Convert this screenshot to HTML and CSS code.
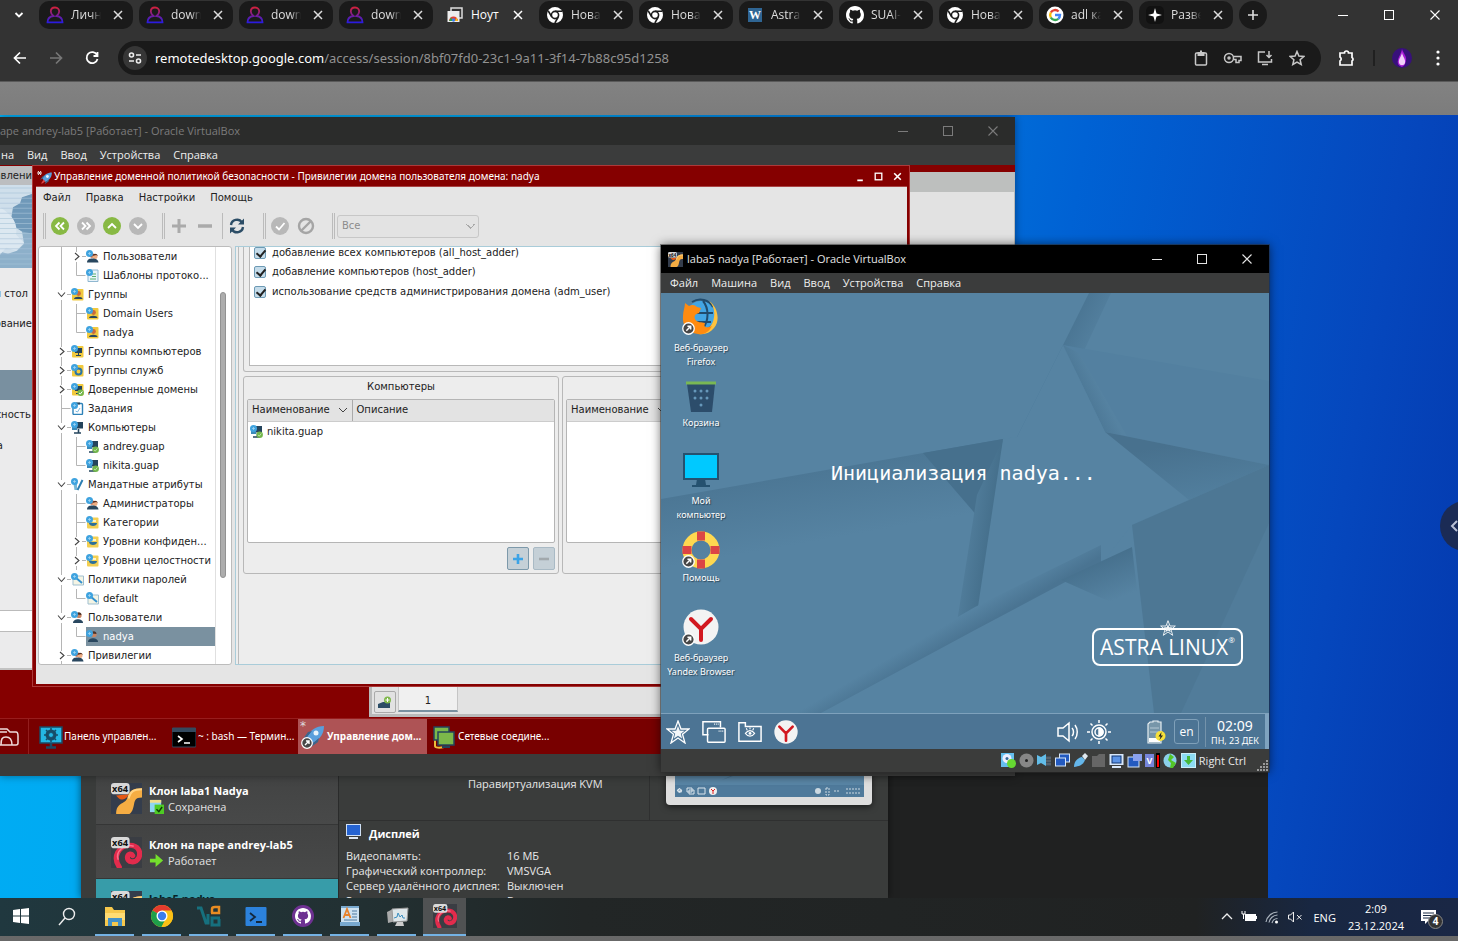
FILE: index.html
```html
<!DOCTYPE html>
<html lang="ru">
<head>
<meta charset="utf-8">
<title>Ноутбук - Удаленный рабочий стол</title>
<link rel="stylesheet" href="styles.css">
</head>
<body>
<svg class="defs" aria-hidden="true">
  <defs>
    <linearGradient id="g-user" x1="0" y1="0" x2="0" y2="1"><stop offset="0" stop-color="#d0213f"/><stop offset="1" stop-color="#2a1be0"/></linearGradient>
  </defs>
  <symbol id="i-user" viewBox="0 0 18 18"><path d="M9 1.500c-3 0-4.200 2-4.200 4s1.300 3.500 2.700 4.500C4 10.500 1.500 13 1.500 16.300h15C16.500 13 14 10.500 10.500 10c1.400-1 2.700-2.500 2.700-4.500s-1.200-4-4.200-4z" fill="none" stroke="url(#g-user)" stroke-width="1.800"/></symbol>
  <symbol id="i-chrome-bw" viewBox="0 0 18 18"><circle cx="9" cy="9" r="8" fill="#fff"/><circle cx="9" cy="9" r="3.600" fill="#fff" stroke="#1b1b1b" stroke-width="1.600"/><path d="M9 5.200h7M5.800 11L2.300 5M12.300 11l-3.500 6" stroke="#1b1b1b" stroke-width="1.500"/></symbol>
  <symbol id="i-chrome" viewBox="0 0 24 24"><circle cx="12" cy="12" r="11" fill="#fbc116"/><path d="M12 12L2.500 6.500A11 11 0 0 1 21.500 6.500z" fill="#e33b2e"/><path d="M12 12L2.500 6.500A11 11 0 0 0 11.500 23L16 14z" fill="#1e9e4a"/><path d="M12 6.500h9.500A11 11 0 0 1 11.500 23L16.500 14z" fill="#fbc116"/><circle cx="12" cy="12" r="5.500" fill="#fff"/><circle cx="12" cy="12" r="4.200" fill="#3b7ded"/></symbol>
  <symbol id="i-octo" viewBox="0 0 16 16"><path fill="currentColor" fill-rule="evenodd" d="M8 0C3.580 0 0 3.580 0 8c0 3.540 2.290 6.530 5.470 7.590.4.070.55-.17.55-.38 0-.19-.01-.82-.01-1.490-2.010.37-2.530-.49-2.690-.94-.09-.23-.48-.94-.82-1.130-.28-.15-.68-.52-.01-.53.63-.01 1.080.58 1.230.82.72 1.210 1.870.87 2.330.66.07-.52.28-.87.51-1.070-1.780-.2-3.640-.89-3.640-3.950 0-.87.31-1.590.82-2.150-.08-.2-.36-1.020.08-2.120 0 0 .67-.21 2.200.82a7.600 7.600 0 0 1 4 0c1.530-1.040 2.200-.82 2.200-.82.44 1.100.16 1.920.08 2.120.51.56.82 1.270.82 2.150 0 3.070-1.870 3.750-3.650 3.950.29.25.54.73.54 1.480 0 1.070-.01 1.930-.01 2.200 0 .21.15.46.55.38A8 8 0 0 0 16 8c0-4.420-3.580-8-8-8z"/></symbol>
  <symbol id="i-x" viewBox="0 0 12 12"><path d="M2 2l8 8M10 2l-8 8" stroke="currentColor" stroke-width="1.500"/></symbol>
  <symbol id="w-min" viewBox="0 0 12 12"><path d="M1 6.500h10" stroke="currentColor"/></symbol>
  <symbol id="w-max" viewBox="0 0 12 12"><rect x="1.500" y="1.500" width="9" height="9" fill="none" stroke="currentColor"/></symbol>
  <symbol id="w-x" viewBox="0 0 12 12"><path d="M1.500 1.500l9 9M10.500 1.500l-9 9" stroke="currentColor" stroke-width="1.100"/></symbol>
  <symbol id="t-open" viewBox="0 0 14 19"><path d="M4.500 0v5M4.500 15v4M10 9.500h4" stroke="#b5b5b5"/><path d="M1 7.500l3.500 4 3.500-4" fill="none" stroke="#444" stroke-width="1.100"/></symbol>
  <symbol id="t-closed" viewBox="0 0 14 19"><path d="M4.500 0v5M4.500 15v4M10 9.500h4" stroke="#b5b5b5"/><path d="M3 6l4 3.500-4 3.500" fill="none" stroke="#444" stroke-width="1.100"/></symbol>
  <symbol id="t-tee" viewBox="0 0 14 19"><path d="M4.500 0v19M4.500 9.500h9" stroke="#b5b5b5" fill="none"/></symbol>
  <symbol id="t-end" viewBox="0 0 14 19"><path d="M4.500 0v9.500h9" stroke="#b5b5b5" fill="none"/></symbol>
  <symbol id="n-badge" viewBox="0 0 13 13"><circle cx="3.500" cy="3.500" r="3.500" fill="#3fa3df"/><path d="M3.500 2v3M2 3.500h3" stroke="#a6d7f2" stroke-width=".7"/></symbol>
  <symbol id="n-users" viewBox="0 0 13 13"><circle cx="6" cy="5.500" r="2.300" fill="#c0532c"/><circle cx="9" cy="6.500" r="2.500" fill="#efae84"/><path d="M6.500 6c0-3 5-3 5.200 0l-1.500-1z" fill="#5b2f20"/><path d="M1 12.500c0-3.500 3-4 5-4s6 0 6.500 4z" fill="#29475f"/><use href="#n-badge"/></symbol>
  <symbol id="n-doc" viewBox="0 0 13 13"><path d="M2 1h10v11.500H2z" fill="#e9f3fa" stroke="#8fb7d0"/><path d="M6 5h4M6 7.500h4M4 10h6" stroke="#5bb072"/><use href="#n-badge"/></symbol>
  <symbol id="n-task" viewBox="0 0 13 13"><rect x="2" y="1.500" width="9.500" height="11" rx="1" fill="#fff" stroke="#2d82b8" stroke-width="1.400"/><path d="M5 1.500h4" stroke="#26485f" stroke-width="2"/><path d="M4.500 9l2 1 2.500-4" stroke="#7cb8df" fill="none"/><use href="#n-badge"/></symbol>
  <symbol id="n-group" viewBox="0 0 13 13"><rect x="1" y="1" width="11.500" height="11.500" rx="1" fill="#f1c93e"/><circle cx="7.500" cy="5.500" r="2.400" fill="#ca6a3d"/><path d="M3 11c0-3 8.500-3 8.500 0z" fill="#29475f"/><use href="#n-badge"/></symbol>
  <symbol id="n-gcomp" viewBox="0 0 13 13"><rect x="1" y="1" width="11.500" height="11.500" rx="1" fill="#f1c93e"/><rect x="4" y="3" width="7" height="5" fill="#24445c"/><path d="M7.500 8v2.500M5 10.500h5" stroke="#24445c"/><use href="#n-badge"/></symbol>
  <symbol id="n-gserv" viewBox="0 0 13 13"><rect x="1" y="1" width="11.500" height="11.500" rx="1" fill="#f1c93e"/><circle cx="7.500" cy="7.500" r="3" fill="none" stroke="#2875a7" stroke-width="2"/><use href="#n-badge"/></symbol>
  <symbol id="n-trust" viewBox="0 0 13 13"><use href="#n-gcomp"/><circle cx="9.700" cy="9.700" r="3.200" fill="#72b64b"/><path d="M8 10l1.300 1 2-2.500" stroke="#fff" fill="none"/></symbol>
  <symbol id="n-comp" viewBox="0 0 13 13"><rect x="3" y="1" width="9" height="6.500" fill="#24445c"/><path d="M7.500 8v4M3 12h7" stroke="#24445c" stroke-width="1.600"/><path d="M1 6h5v3H1z" fill="#3b8ab8"/><use href="#n-badge"/></symbol>
  <symbol id="n-host" viewBox="0 0 13 13"><use href="#n-comp"/><circle cx="9.700" cy="9.700" r="3.200" fill="#72b64b"/><path d="M8 10l1.300 1 2-2.500" stroke="#cfe9bf" fill="none" stroke-width=".8"/></symbol>
  <symbol id="n-attr" viewBox="0 0 13 13"><path d="M2 3h4v9H3.500z" fill="#79b8d6"/><path d="M11.500 2L6.500 12" stroke="#2d7fb3" stroke-width="2"/><use href="#n-badge"/></symbol>
  <symbol id="n-folder" viewBox="0 0 13 13"><rect x="1" y="1.500" width="11.500" height="11" rx="1" fill="#f3cf52"/><path d="M3 7h8c0 4-8 4-8 0z" fill="#2c6f99"/><path d="M5 5h5" stroke="#fff5c8" stroke-width="2"/><use href="#n-badge"/></symbol>
  <symbol id="n-key" viewBox="0 0 13 13"><path d="M2 3h10.500v9H2z" fill="#f4f4e4" stroke="#9fbfd0"/><path d="M4 4l7 6" stroke="#3391cf" stroke-width="2"/><use href="#n-badge"/></symbol>
  <symbol id="n-user" viewBox="0 0 13 13"><circle cx="8" cy="4.500" r="2.600" fill="#c98563"/><path d="M5.500 3.500c0-3 5-3 5 .5z" fill="#4c3329"/><path d="M2 12c0-5 10-5 10 0z" fill="#29475f"/><use href="#n-badge"/></symbol>
  <symbol id="i-link" viewBox="0 0 12 12"><circle cx="6" cy="6" r="5.300" fill="#474747" stroke="#fff" stroke-width="1.200"/><path d="M4 8l4-4M5 4h3v3" stroke="#fff" fill="none" stroke-width="1.400"/></symbol>
  <symbol id="i-vb-y" viewBox="0 0 30 30"><rect width="30" height="30" fill="#343d4c"/><path d="M30 5v9c-7 0-7 3-8 8-1 5-3 8-5 8H5c0-12 9-9 11-16 1-6 5-9 14-9z" fill="#f5ad43"/><path d="M5 12c4 6 10 5 12-1z" fill="#e55813"/><path d="M30 6c-8 0-11 2-13 9" stroke="#ffd383" fill="none" stroke-width="2"/><rect width="18" height="11" rx="3" fill="#d9d9d9"/><text x="1" y="9" font-family="Open Sans" font-weight="700" font-size="9" fill="#111">x64</text></symbol>
  <symbol id="i-vb-r" viewBox="0 0 30 30"><rect width="30" height="30" fill="#3a3d43"/><path d="M8 29C1 19 8 8 18 8c9 0 11 7 9 12-3 6-12 5-11-1 1-3 4-3 5-1" fill="none" stroke="#e22b4c" stroke-width="5" stroke-linecap="round"/><path d="M7 22C4 14 13 6 22 9" fill="none" stroke="#f7718b" stroke-width="1.500"/><rect width="18" height="11" rx="3" fill="#d9d9d9"/><text x="1" y="9" font-family="Open Sans" font-weight="700" font-size="9" fill="#111">x64</text></symbol>
  <symbol id="i-yandex" viewBox="0 0 36 36"><circle cx="18" cy="18" r="17.500" fill="#f3f3f3"/><path d="M8 10l10 10 10-10M18 19v12" fill="none" stroke="#d21820" stroke-width="4" stroke-linecap="round"/></symbol>
  <symbol id="i-wins" viewBox="0 0 26 24"><path d="M7 15H1V1h19v6" fill="none" stroke="#fff" stroke-width="1.600"/><rect x="6" y="8" width="19" height="15" rx="1" fill="none" stroke="#fff" stroke-width="1.600"/><path d="M13 3.500h5M18 11h5" stroke="#fff" stroke-dasharray="1 1" stroke-width="1.500"/></symbol>
  <symbol id="i-fold" viewBox="0 0 26 24"><path d="M1 22V2h7v4h17v16z" fill="none" stroke="#fff" stroke-width="1.600"/><path d="M8 13.500c3-4 7-4 10 0-3 4-7 4-10 0zM10 10L9 8M13 9V7M16 10l1-2" stroke="#fff" fill="none" stroke-width="1.200"/><circle cx="13" cy="13.500" r="1.600" fill="#fff"/></symbol>
  <symbol id="i-star" viewBox="0 0 24 24"><path d="M12 1l3 8h8l-6.500 5.200L19 23l-7-5-7 5 2.500-8.800L1 9h8z" fill="none" stroke="#fff" stroke-width="1.300"/><path d="M12 6l1.800 4.800h4.700l-3.700 3 1.300 4.700L12 15.800l-4.100 2.700 1.300-4.700-3.700-3h4.700z" fill="#f4f7f9"/></symbol>
  <symbol id="i-rocket" viewBox="0 0 24 24"><path d="M6 12C9 5 15 1 23 1c0 8-4 13-11 17z" fill="#5a9fdc"/><path d="M6 12l-4 2 5-7 4-1zM12 18l-2 4 7-5 1-4z" fill="#3d668c"/><circle cx="15" cy="8" r="2.500" fill="#e9f4fb"/><path d="M4 20l4-6 3 3-6 4z" fill="#e04848"/></symbol>
</svg>

<header class="browser">
  <nav class="tabs" aria-label="Вкладки">
    <button class="icon-btn tab-search" aria-label="Поиск вкладок"><svg width="12" height="12" viewBox="0 0 12 12"><path d="M2.500 4L6 7.500 9.500 4" fill="none" stroke="#fff" stroke-width="1.800"/></svg></button>
    <div class="tab"><svg class="fav"><use href="#i-user"/></svg><span>Личный</span><button class="icon-btn" aria-label="Закрыть"><svg><use href="#i-x"/></svg></button></div>
    <div class="tab"><svg class="fav"><use href="#i-user"/></svg><span>downl</span><button class="icon-btn" aria-label="Закрыть"><svg><use href="#i-x"/></svg></button></div>
    <div class="tab"><svg class="fav"><use href="#i-user"/></svg><span>downl</span><button class="icon-btn" aria-label="Закрыть"><svg><use href="#i-x"/></svg></button></div>
    <div class="tab"><svg class="fav"><use href="#i-user"/></svg><span>downl</span><button class="icon-btn" aria-label="Закрыть"><svg><use href="#i-x"/></svg></button></div>
    <div class="tab active"><svg class="fav" viewBox="0 0 18 18"><path d="M5 2h11v10H5z" fill="none" stroke="#ddd" stroke-width="1.500"/><path d="M1.500 5h12v11h-12z" fill="#eee"/><path d="M3 15a4.500 4.500 0 0 1 9 0z" fill="#e34133"/><path d="M3 15l2-3.500 2 3.500z" fill="#2ba24c"/><path d="M9 15l1.500-3.500L12 15z" fill="#fbc116"/><circle cx="7.500" cy="14" r="1.700" fill="#3b7ded"/></svg><span>Ноут</span><button class="icon-btn" aria-label="Закрыть"><svg><use href="#i-x"/></svg></button></div>
    <div class="tab"><svg class="fav"><use href="#i-chrome-bw"/></svg><span>Новая</span><button class="icon-btn" aria-label="Закрыть"><svg><use href="#i-x"/></svg></button></div>
    <div class="tab"><svg class="fav"><use href="#i-chrome-bw"/></svg><span>Новая</span><button class="icon-btn" aria-label="Закрыть"><svg><use href="#i-x"/></svg></button></div>
    <div class="tab"><svg class="fav" viewBox="0 0 18 18"><rect x="2" y="2" width="14" height="14" fill="#2f6593"/><text x="3" y="13" font-family="Liberation Serif" font-weight="700" font-size="12" fill="#fff">W</text></svg><span>Astra</span><button class="icon-btn" aria-label="Закрыть"><svg><use href="#i-x"/></svg></button></div>
    <div class="tab octo"><svg class="fav"><use href="#i-octo"/></svg><span>SUAI-</span><button class="icon-btn" aria-label="Закрыть"><svg><use href="#i-x"/></svg></button></div>
    <div class="tab"><svg class="fav"><use href="#i-chrome-bw"/></svg><span>Новая</span><button class="icon-btn" aria-label="Закрыть"><svg><use href="#i-x"/></svg></button></div>
    <div class="tab"><svg class="fav" viewBox="0 0 18 18"><circle cx="9" cy="9" r="8.500" fill="#fff"/><g fill="none" stroke-width="2.400"><path d="M4.800 6.500A5 5 0 0 1 12.600 5.500" stroke="#e34133"/><path d="M4.800 6.500a5 5 0 0 0 0 5" stroke="#fbbc05"/><path d="M4.800 11.500a5 5 0 0 0 7.500 1.300" stroke="#34a853"/><path d="M9 9h5c0 1.500-.6 2.800-1.700 3.800" stroke="#4285f4"/></g></svg><span>adl ка</span><button class="icon-btn" aria-label="Закрыть"><svg><use href="#i-x"/></svg></button></div>
    <div class="tab"><svg class="fav" viewBox="0 0 18 18"><rect width="18" height="18" rx="5" fill="#111"/><path d="M9 2l1.500 5.500L16 9l-5.500 1.500L9 16l-1.500-5.500L2 9l5.500-1.500z" fill="#fff"/></svg><span>Разве</span><button class="icon-btn" aria-label="Закрыть"><svg><use href="#i-x"/></svg></button></div>
    <button class="icon-btn new-tab" aria-label="Новая вкладка"><svg width="12" height="12" viewBox="0 0 12 12"><path d="M6 1v10M1 6h10" stroke="#ddd" stroke-width="1.600"/></svg></button>
    <div class="win-ctl chrome-ctl"><button class="icon-btn" aria-label="Свернуть"><svg><use href="#w-min"/></svg></button><button class="icon-btn" aria-label="Развернуть"><svg><use href="#w-max"/></svg></button><button class="icon-btn" aria-label="Закрыть"><svg><use href="#w-x"/></svg></button></div>
  </nav>
  <div class="toolbar">
    <button class="icon-btn nav-btn" aria-label="Назад"><svg width="16" height="16" viewBox="0 0 16 16"><path d="M14 8H3M8 2.500L2.500 8 8 13.500" fill="none" stroke="#fff" stroke-width="1.700"/></svg></button>
    <button class="icon-btn nav-btn" aria-label="Вперед"><svg width="16" height="16" viewBox="0 0 16 16"><path d="M2 8h11M8 2.500L13.500 8 8 13.500" fill="none" stroke="#777" stroke-width="1.700"/></svg></button>
    <button class="icon-btn nav-btn" aria-label="Обновить"><svg width="16" height="16" viewBox="0 0 16 16"><path d="M13 5A5.500 5.500 0 1 0 13.500 9M13.500 2v4h-4" fill="none" stroke="#fff" stroke-width="1.800"/></svg></button>
    <div class="omnibox">
      <button class="icon-btn site" aria-label="Сведения о сайте"><svg width="14" height="14" viewBox="0 0 14 14" fill="none" stroke="#eee" stroke-width="1.600"><circle cx="3.500" cy="4" r="2"/><path d="M8 4h5M1 10h5"/><circle cx="10.500" cy="10" r="2"/></svg></button>
      <a class="url" href="#"><b>remotedesktop.google.com</b>/access/session/8bf07fd0-23c1-9a11-3f14-7b88c95d1258</a>
      <svg viewBox="0 0 16 16"><rect x="2.500" y="3" width="11" height="12" rx="1"/><path d="M5.500 3h5v2h-5zM7 1.500h2" stroke-width="2"/></svg>
      <svg class="wide" viewBox="0 0 20 16"><circle cx="6" cy="8" r="4.500"/><circle cx="6" cy="8" r="1"/><path d="M10.500 6.500H18v4h-2v2h-3v-3h-2.500"/></svg>
      <svg viewBox="0 0 16 16"><path d="M8 2H1.500v10h13V9M5 14.500h6M12 1v6M9.500 5l2.500 2.500L14.500 5"/></svg>
      <svg viewBox="0 0 16 16"><path d="M8 1.500l1.900 4.600 4.900.4-3.700 3.200 1.100 4.800L8 12l-4.200 2.500 1.100-4.800L1.200 6.500l4.900-.4z"/></svg>
    </div>
    <button class="icon-btn ext" aria-label="Расширения"><svg width="18" height="18" viewBox="0 0 18 18"><path d="M2 4h4.500a2 2 0 0 1 4 0H14v4.500a2 2 0 0 1 0 3.500v4H2v-4a2.300 2.300 0 0 0 0-4z" fill="none" stroke="#fff" stroke-width="1.700"/></svg></button>
    <i class="divider"></i>
    <button class="icon-btn" aria-label="Профиль"><svg width="20" height="20" viewBox="0 0 20 20"><circle cx="10" cy="10" r="10" fill="#38107b"/><path d="M10 1c1 4 5 7 4 12-1 4-2 5-4 6-3-1-5-3-4-7s3-6 4-11z" fill="#a51bd4"/><path d="M10 4c0 4 4 7 3 11-1 3-5 3-6 0-1-4 3-7 3-11z" fill="#f1d0fa"/></svg></button>
    <button class="icon-btn menu" aria-label="Меню"><svg width="4" height="16" viewBox="0 0 4 16" fill="#fff"><circle cx="2" cy="2" r="1.600"/><circle cx="2" cy="8" r="1.600"/><circle cx="2" cy="14" r="1.600"/></svg></button>
  </div>
</header>

<main class="page">
  <div class="desktop">
    <section class="win backdrop" aria-label="Фон"></section>

    <section class="win manager" aria-label="Oracle VirtualBox Менеджер">
      <div class="vm-list">
        <div class="vm"><svg class="vm-ico"><use href="#i-vb-y"/></svg><div><b>Клон laba1 Nadya</b><span><svg viewBox="0 0 16 16"><path d="M1 1h12v13H1z" fill="#8fd6f2"/><path d="M1 1h12v3H1z" fill="#f2dc8c"/><rect x="6" y="6" width="10" height="10" fill="#4ecb24"/><path d="M8 11l2.500 2.500L14 8.500" fill="none" stroke="#0d3b07" stroke-width="1.600"/></svg>Сохранена</span></div></div>
        <div class="vm"><svg class="vm-ico"><use href="#i-vb-r"/></svg><div><b>Клон на паре andrey-lab5</b><span><svg viewBox="0 0 16 16"><path d="M1 6h6V1l8 7-8 7v-5H1z" fill="#74e02c"/></svg>Работает</span></div></div>
        <div class="vm sel"><svg class="vm-ico"><use href="#i-vb-y"/></svg><div><b>laba5 nadya</b></div></div>
      </div>
      <div class="details">
        <div class="det-top"><p class="kvm">Паравиртуализация KVM</p>
          <div class="preview"><svg viewBox="0 0 206 35" width="206" height="35"><path d="M0 0h206v30q0 4-4 4H4q-4 0-4-4z" fill="#dedede"/><rect x="9" width="189" height="26" fill="#4f7a9b"/><path d="M9 0h189v14H9z" fill="#5985a5"/><path d="M56 9l19-9h5z" fill="#48718e"/><path d="M11 19h5l-2.500 3zM13.500 17l2 4-4-1zM21 17h5v4h-5zM23 19h5v4h-5zM32 17h7v6h-7z" fill="none" stroke="#dbe5ec"/><circle cx="47" cy="20" r="4" fill="#eee"/><path d="M45 18l2 2 2-2M47 20v3" stroke="#d22" fill="none"/><circle cx="152" cy="20" r="3" fill="#ccd9e2"/><path d="M160 17h3v7h-3zM168 20h6M180 18h14M180 22h14" stroke="#ccd9e2" fill="none" stroke-dasharray="2 1"/></svg></div>
        </div>
        <h3><svg width="15" height="15" viewBox="0 0 15 15"><rect x=".5" y=".5" width="14" height="11" fill="#2563d1" stroke="#cfe0f5"/><path d="M3 14h9" stroke="#dfe8f2" stroke-width="2"/></svg>Дисплей</h3>
        <dl><dt>Видеопамять:</dt><dd>16 МБ</dd><dt>Графический контроллер:</dt><dd>VMSVGA</dd><dt>Сервер удалённого дисплея:</dt><dd>Выключен</dd><dt>Запись:</dt><dd>Выключена</dd></dl>
      </div>
    </section>

    <section class="win vm-a" aria-label="andrey-lab5">
      <div class="titlebar dim"><span>аре andrey-lab5 [Работает] - Oracle VirtualBox</span><div class="win-ctl"><button class="icon-btn" aria-label="Свернуть"><svg><use href="#w-min"/></svg></button><button class="icon-btn" aria-label="Развернуть"><svg><use href="#w-max"/></svg></button><button class="icon-btn" aria-label="Закрыть"><svg><use href="#w-x"/></svg></button></div></div>
      <nav class="menubar cut"><button>на</button><button>Вид</button><button>Ввод</button><button>Устройства</button><button>Справка</button></nav>
      <div class="guest-a">
        <div class="win left-win">
          <div class="lw-title">авлени</div>
          <svg viewBox="0 0 32 82" preserveAspectRatio="none"><rect width="32" height="82" fill="#8db0ca"/><path d="M32 9L24 12 22 20 14 24 12 34 16 42 22 46 24 58 17 65 8 68 0 66V0h32z" fill="#cfdfeb"/><path d="M32 9L22 12 20 18 13 22 11 34 16 42 22 46 32 48z" fill="#7099b9"/><path d="M0 22c14 8 18 18 16 27l8 8-8 8-10-3-6 7z" fill="#dce8f1"/><path d="M0 3h32M0 8h32M0 13h32M0 18h32M0 23h32M0 28h32M0 33h32M0 38h32M0 43h32M0 48h32M0 53h32M0 58h32M0 63h32M0 68h32M0 73h32M0 78h32" stroke="#a9c4d8" stroke-opacity=".6"/></svg>
          <p class="t1">й стол</p><p class="t2">ование</p><i class="lw-sel"></i><p class="t3">сность</p><p class="t4">а</p><i class="lw-input"></i>
        </div>
        <div class="win right-win"><div class="rw-title"></div><div class="rw-body"></div>
          <div class="rw-tabs"><button class="add" aria-label="Новая вкладка"><svg width="14" height="12" viewBox="0 0 14 12"><path d="M0 8l5-2h7v6H0z" fill="#2c4d66"/><circle cx="9.500" cy="4" r="3.500" fill="#7fb84b"/><path d="M9.500 2v4M7.500 4h4" stroke="#fff"/></svg></button><button class="one">1</button></div>
        </div>
        <div class="win policy">
          <div class="p-title"><svg width="18" height="16" viewBox="0 0 18 16"><path d="M1 4h5M2 2l3 4M5 2L2 6" stroke="#eee"/><g transform="translate(3 3) scale(.56)"><use href="#i-rocket" width="24" height="24"/></g></svg><span>Управление доменной политикой безопасности - Привилегии домена пользователя домена: nadya</span><div class="p-ctl"><button class="icon-btn" aria-label="Свернуть"><svg viewBox="0 0 10 10"><path d="M3 8.500h5" stroke="#fff" stroke-width="1.600"/></svg></button><button class="icon-btn" aria-label="Развернуть"><svg viewBox="0 0 10 10"><rect x="2" y="2" width="6" height="6" fill="none" stroke="#fff" stroke-width="1.200"/></svg></button><button class="icon-btn" aria-label="Закрыть"><svg viewBox="0 0 10 10"><path d="M2 2l6 6M8 2l-6 6" stroke="#fff" stroke-width="1.400"/></svg></button></div></div>
          <nav class="p-menu"><button>Файл</button><button>Правка</button><button>Настройки</button><button>Помощь</button></nav>
          <div class="p-tools">
            <i class="grip"></i>
            <button class="round green" aria-label="Назад"><svg viewBox="0 0 18 18"><path d="M8.500 5.500L5 9l3.500 3.500M13 5.500L9.500 9l3.500 3.500"/></svg></button>
            <button class="round" aria-label="Вперед"><svg viewBox="0 0 18 18"><path d="M5 5.500L8.500 9 5 12.500M9.500 5.500L13 9l-3.500 3.500"/></svg></button>
            <button class="round green" aria-label="Вверх"><svg viewBox="0 0 18 18"><path d="M5 11l4-4 4 4"/></svg></button>
            <button class="round" aria-label="Вниз"><svg viewBox="0 0 18 18"><path d="M5 7l4 4 4-4"/></svg></button>
            <i class="grip g2"></i>
            <button class="plain" aria-label="Добавить"><svg viewBox="0 0 18 18"><path d="M9 2v14M2 9h14" stroke="#aaa" stroke-width="3"/></svg></button>
            <button class="plain" aria-label="Удалить"><svg viewBox="0 0 18 18"><path d="M2 9h14" stroke="#aaa" stroke-width="3.500"/></svg></button>
            <i class="grip g3"></i>
            <button class="plain" aria-label="Обновить"><svg viewBox="0 0 18 18"><path d="M3 8a6 6 0 0 1 11-2.500M15 10a6 6 0 0 1-11 2.500" fill="none" stroke="#2c4d66" stroke-width="2.400"/><path d="M16 1.500v6h-6zM2 16.500v-6h6z" fill="#2c4d66"/></svg></button>
            <i class="grip g4"></i>
            <button class="round" aria-label="Применить"><svg viewBox="0 0 18 18"><path d="M5 9.500l3 3 5.500-6.500"/></svg></button>
            <button class="plain" aria-label="Отменить"><svg viewBox="0 0 18 18" fill="none" stroke="#a5a5a5" stroke-width="2.400"><circle cx="9" cy="9" r="7"/><path d="M4.500 13.500l9-9"/></svg></button>
            <i class="grip g4"></i>
            <select class="filter" aria-label="Фильтр" disabled><option>Все</option></select>
          </div>
          <div class="p-main">
            <div class="tree">
              <ul>
                <li class="l2"><svg class="tw"><use href="#t-closed"/></svg><a href="#"><svg><use href="#n-users"/></svg>Пользователи</a></li>
                <li class="l2"><svg class="tw"><use href="#t-end"/></svg><a href="#"><svg><use href="#n-doc"/></svg>Шаблоны протоко...</a></li>
                <li><svg class="tw"><use href="#t-open"/></svg><a href="#"><svg><use href="#n-group"/></svg>Группы</a></li>
                <li class="l2"><svg class="tw"><use href="#t-tee"/></svg><a href="#"><svg><use href="#n-group"/></svg>Domain Users</a></li>
                <li class="l2"><svg class="tw"><use href="#t-end"/></svg><a href="#"><svg><use href="#n-group"/></svg>nadya</a></li>
                <li><svg class="tw"><use href="#t-closed"/></svg><a href="#"><svg><use href="#n-gcomp"/></svg>Группы компьютеров</a></li>
                <li><svg class="tw"><use href="#t-closed"/></svg><a href="#"><svg><use href="#n-gserv"/></svg>Группы служб</a></li>
                <li><svg class="tw"><use href="#t-closed"/></svg><a href="#"><svg><use href="#n-trust"/></svg>Доверенные домены</a></li>
                <li><svg class="tw"><use href="#t-tee"/></svg><a href="#"><svg><use href="#n-task"/></svg>Задания</a></li>
                <li><svg class="tw"><use href="#t-open"/></svg><a href="#"><svg><use href="#n-comp"/></svg>Компьютеры</a></li>
                <li class="l2"><svg class="tw"><use href="#t-tee"/></svg><a href="#"><svg><use href="#n-host"/></svg>andrey.guap</a></li>
                <li class="l2"><svg class="tw"><use href="#t-end"/></svg><a href="#"><svg><use href="#n-host"/></svg>nikita.guap</a></li>
                <li><svg class="tw"><use href="#t-open"/></svg><a href="#"><svg><use href="#n-attr"/></svg>Мандатные атрибуты</a></li>
                <li class="l2"><svg class="tw"><use href="#t-tee"/></svg><a href="#"><svg><use href="#n-users"/></svg>Администраторы</a></li>
                <li class="l2"><svg class="tw"><use href="#t-tee"/></svg><a href="#"><svg><use href="#n-folder"/></svg>Категории</a></li>
                <li class="l2"><svg class="tw"><use href="#t-closed"/></svg><a href="#"><svg><use href="#n-folder"/></svg>Уровни конфиден...</a></li>
                <li class="l2"><svg class="tw"><use href="#t-closed"/></svg><a href="#"><svg><use href="#n-folder"/></svg>Уровни целостности</a></li>
                <li><svg class="tw"><use href="#t-open"/></svg><a href="#"><svg><use href="#n-key"/></svg>Политики паролей</a></li>
                <li class="l2"><svg class="tw"><use href="#t-end"/></svg><a href="#"><svg><use href="#n-key"/></svg>default</a></li>
                <li><svg class="tw"><use href="#t-open"/></svg><a href="#"><svg><use href="#n-user"/></svg>Пользователи</a></li>
                <li class="l2 sel"><svg class="tw"><use href="#t-end"/></svg><a href="#"><svg><use href="#n-user"/></svg>nadya</a></li>
                <li><svg class="tw"><use href="#t-closed"/></svg><a href="#"><svg><use href="#n-users"/></svg>Привилегии</a></li>
              </ul>
              <div class="lane"><i></i></div>
            </div>
            <div class="pane">
              <div class="privs"><div class="privs-in">
                <label><input type="checkbox" checked>добавление всех компьютеров (all_host_adder)</label>
                <label><input type="checkbox" checked>добавление компьютеров (host_adder)</label>
                <label><input type="checkbox" checked>использование средств администрирования домена (adm_user)</label>
              </div></div>
              <div class="boxes">
                <div class="gbox"><h4>Компьютеры</h4>
                  <div class="list"><table><thead><tr><th class="name"><span>Наименование<svg width="10" height="8" viewBox="0 0 10 8"><path d="M1 2l4 4 4-4" fill="none" stroke="#444"/></svg></span></th><th>Описание</th></tr></thead><tbody><tr><td><span><svg width="13" height="13"><use href="#n-host"/></svg>nikita.guap</span></td><td></td></tr></tbody></table></div>
                  <div class="pm"><button aria-label="Добавить"><svg viewBox="0 0 12 12"><path d="M6 1v10M1 6h10" stroke="#3ba3e6" stroke-width="2.600"/></svg></button><button aria-label="Удалить" class="off"><svg viewBox="0 0 12 12"><path d="M1 6h10" stroke="#a2a9ad" stroke-width="2.600"/></svg></button></div>
                </div>
                <div class="gbox"><h4>&nbsp;</h4>
                  <div class="list"><table><thead><tr><th class="name"><span>Наименование<svg width="10" height="8" viewBox="0 0 10 8"><path d="M1 2l4 4 4-4" fill="none" stroke="#444"/></svg></span></th><th></th></tr></thead></table></div>
                  <div class="pm"></div>
                </div>
              </div>
            </div>
          </div>
        </div>
        <div class="red-bar">
          <svg class="home" width="20" height="22" viewBox="0 0 20 22"><path d="M0 3h7l3 3h6c2 0 2 2 2 4v7c0 2-1 2-2 2H0M0 6h7M1 19c0-6 1-8 5-8s6 3 6 8" fill="none" stroke="#eedada" stroke-width="1.500"/></svg>
          <button class="rb r1"><svg viewBox="0 0 24 24"><rect x="1" y="2" width="22" height="16" fill="#24b7e3" stroke="#1d4963" stroke-width="1.500"/><circle cx="12" cy="10" r="4" fill="none" stroke="#174d68" stroke-width="3"/><path d="M12 3v14M5 10h14M7 5l10 10M17 5L7 15" stroke="#174d68" stroke-width="1.500"/><circle cx="12" cy="10" r="2" fill="#24b7e3"/><path d="M12 18v4M7 22.500h10" stroke="#1d4963" stroke-width="2.500"/></svg>Панель управлен...</button>
          <button class="rb"><svg viewBox="0 0 24 24"><rect x="0" y="3" width="24" height="19" rx="1" fill="#000" stroke="#34495e"/><path d="M0 3h24v4H0z" fill="#34495e"/><path d="M6 11l4 3-4 3M12 18h6" stroke="#fff" fill="none" stroke-width="1.600"/></svg>~ : bash — Термин...</button>
          <button class="rb act"><span class="star">*</span><svg viewBox="0 0 24 24"><use href="#i-rocket"/><g transform="translate(0 12)"><use href="#i-link" width="12" height="12"/></g></svg>Управление дом...</button>
          <button class="rb net"><svg viewBox="0 0 24 24"><path d="M3 13v8c0 2 5 2 9 1" fill="none" stroke="#ecc03a" stroke-width="2"/><rect x="2" y="2" width="15" height="13" fill="#7cb84a" stroke="#24445c" stroke-width="1.500"/><rect x="6" y="7" width="16" height="13" fill="#7cb84a" stroke="#24445c" stroke-width="1.500"/><path d="M10 22h8" stroke="#24445c" stroke-width="2"/></svg>Сетевые соедине...</button>
        </div>
      </div>
      <div class="status-a"></div>
    </section>

    <section class="win vm-n" aria-label="laba5 nadya">
      <div class="titlebar"><svg class="tb-ico"><use href="#i-vb-y"/></svg><span>laba5 nadya [Работает] - Oracle VirtualBox</span><div class="win-ctl"><button class="icon-btn" aria-label="Свернуть"><svg><use href="#w-min"/></svg></button><button class="icon-btn" aria-label="Развернуть"><svg><use href="#w-max"/></svg></button><button class="icon-btn" aria-label="Закрыть"><svg><use href="#w-x"/></svg></button></div></div>
      <nav class="menubar"><button>Файл</button><button>Машина</button><button>Вид</button><button>Ввод</button><button>Устройства</button><button>Справка</button></nav>
      <div class="guest-n">
        <svg class="paper" viewBox="0 0 608 420" preserveAspectRatio="none">
          <defs>
            <linearGradient id="p1" gradientUnits="userSpaceOnUse" x1="190" y1="172" x2="202" y2="240"><stop offset="0" stop-color="#4c7795"/><stop offset="1" stop-color="#5683a2"/></linearGradient>
            <linearGradient id="p3" gradientUnits="userSpaceOnUse" x1="392" y1="65" x2="425" y2="82"><stop offset="0" stop-color="#4a7593"/><stop offset="1" stop-color="#5683a2"/></linearGradient>
            <linearGradient id="p4" gradientUnits="userSpaceOnUse" x1="303" y1="321" x2="313" y2="338"><stop offset="0" stop-color="#5683a2"/><stop offset="1" stop-color="#4a7492"/></linearGradient>
            <linearGradient id="p5" gradientUnits="userSpaceOnUse" x1="298" y1="230" x2="334" y2="235"><stop offset="0" stop-color="#5683a2"/><stop offset="1" stop-color="#436d89"/></linearGradient>
            <linearGradient id="p6" gradientUnits="userSpaceOnUse" x1="436" y1="90" x2="416" y2="100"><stop offset="0" stop-color="#5582a1"/><stop offset="1" stop-color="#4a7593"/></linearGradient>
            <linearGradient id="p7" gradientUnits="userSpaceOnUse" x1="520" y1="150" x2="530" y2="205"><stop offset="0" stop-color="#48718e"/><stop offset="1" stop-color="#517e9d"/></linearGradient>
            <linearGradient id="p8" gradientUnits="userSpaceOnUse" x1="430" y1="270" x2="446" y2="310"><stop offset="0" stop-color="#46708d"/><stop offset="1" stop-color="#5683a2"/></linearGradient>
          </defs>
          <rect width="608" height="420" fill="#5683a2"/>
          <path d="M342 146L0 206v80l320-40z" fill="url(#p1)"/>
          <path d="M342 146l-80 14 62 72z" fill="#46708d"/>
          <path d="M428 0l-26 52-46 92 30-6 34-74L450 0z" fill="url(#p3)"/>
          <path d="M402 52l42 87 164 33V88z" fill="#5380a0"/>
          <path d="M402 52l42 87 22 4L418 60z" fill="url(#p6)"/>
          <path d="M402 52l-46 92-14 2-28 188 130-68 27-34 137-60-164-33z" fill="#5683a2"/>
          <path d="M444 139l164 33-80 35z" fill="url(#p7)"/>
          <path d="M342 146l-28 188-20 8 22-140z" fill="url(#p5)"/>
          <path d="M130 420L314 314l126-62v18l-126 67L160 420z" fill="url(#p4)"/>
          <path d="M400 287l71-33 8 68z" fill="url(#p8)"/>
          <path d="M608 172L471 232l22 188h115z" fill="#4d7794"/>
          <path d="M608 230L520 420h88z" fill="#517c9a"/>
        </svg>
        <div class="icons">
          <a href="#" class="d1"><svg viewBox="0 0 38 38"><circle cx="19" cy="17" r="14" fill="#43a5e3"/><path d="M10 4c8-5 17-2 21 5M7 15h24M11 24h18M21 3c6 7 6 20 0 27" fill="none" stroke="#214b6c" stroke-width="2"/><path d="M27 3c8 5 12 19 5 27-4 5-10 7-15 6 8-3 14-8 15-17 1-7-1-12-5-16z" fill="#ffc33e"/><path d="M3 5l4 3c4-2 6-1 8 1l4 1-2 5c-4 1-5 3-4 6 2 4 7 3 10 4-2 5 2 5 7 3-3 6-8 9-14 8C5 35 0 27 1 18c0-5 2-9 2-13z" fill="#ff8b10"/><g transform="translate(0 24)"><use href="#i-link" width="13" height="13"/></g></svg>Веб-браузер<br>Firefox</a>
          <a href="#" class="d2"><svg viewBox="0 0 38 38"><path d="M5 6h28l-3 28H9z" fill="#2c4d6b"/><path d="M4 5h30" stroke="#79b754" stroke-width="3"/><g fill="#6698ba"><circle cx="13" cy="13" r="1.500"/><circle cx="19" cy="13" r="1.500"/><circle cx="25" cy="13" r="1.500"/><circle cx="13" cy="20" r="1.500"/><circle cx="19" cy="20" r="1.500"/><circle cx="25" cy="20" r="1.500"/><circle cx="19" cy="27" r="1.500"/></g></svg>Корзина</a>
          <a href="#" class="d3"><svg viewBox="0 0 38 38"><rect x="2" y="3" width="34" height="25" fill="#00c9ff" stroke="#25516f" stroke-width="2"/><path d="M15 28h8l1 6h4v2H10v-2h4z" fill="#25516f"/></svg>Мой<br>компьютер</a>
          <a href="#" class="d4"><svg viewBox="0 0 38 38"><circle cx="19" cy="19" r="14" fill="none" stroke="#ffd850" stroke-width="9"/><path d="M19 .5v9M19 28.500v9M.5 19h9M28.500 19h9" stroke="#dc4545" stroke-width="8"/><g transform="translate(0 24)"><use href="#i-link" width="13" height="13"/></g></svg>Помощь</a>
          <a href="#" class="d5"><svg viewBox="0 0 38 38"><use href="#i-yandex" x="1" y="1" width="36" height="36"/><g transform="translate(0 25)"><use href="#i-link" width="13" height="13"/></g></svg>Веб-браузер<br>Yandex Browser</a>
        </div>
        <p class="init">Инициализация nadya...</p>
        <div class="logo"><span>ASTRA LINUX</span><sup>®</sup><svg><use href="#i-star"/></svg></div>
        <div class="n-bar">
          <svg class="s24"><use href="#i-star"/></svg><svg class="s24"><use href="#i-wins"/></svg><svg class="s24"><use href="#i-fold"/></svg><svg class="s24"><use href="#i-yandex"/></svg>
          <div class="n-tray">
            <svg width="22" height="22" viewBox="0 0 22 22" fill="none" stroke="#fff" stroke-width="1.500"><path d="M1 7h5l6-5v18l-6-5H1zM15 7c2 2 2 6 0 8M18 4c3 4 3 10 0 14"/></svg>
            <svg width="26" height="26" viewBox="0 0 26 26" fill="none" stroke="#fff" stroke-width="1.500"><circle cx="13" cy="13" r="7"/><path d="M13 9a4 4 0 0 1 0 8z" fill="#fff"/><circle cx="13" cy="13" r="4"/><path d="M13 1v3M13 22v3M1 13h3M22 13h3M4.500 4.500l2 2M19.500 19.500l2 2M21.500 4.500l-2 2M4.500 21.500l2-2"/></svg>
            <svg class="bat" width="20" height="24" viewBox="0 0 20 24"><path d="M4 2h3V1h5v1h3v21H2V4z" fill="#7796a9" stroke="#e7eef2" stroke-width="1.200"/><path d="M3 18h11v4H3z" fill="#fff"/><path d="M4 8h9M4 12h9" stroke="#b5c7d3"/><circle cx="14.500" cy="16" r="5" fill="#f7e03a"/><path d="M15.500 12l-3 4.500h2l-1 3.500 3.500-4.500h-2z" fill="#222"/></svg>
            <button class="lang">en</button><i class="n-div"></i>
            <div class="n-clock"><b>02:09</b><span>ПН, 23 ДЕК</span></div><i class="n-edge"></i>
          </div>
        </div>
      </div>
      <div class="status-n">
        <svg viewBox="0 0 15 15"><rect width="13" height="14" fill="#65bff0"/><circle cx="6" cy="5.500" r="4.500" fill="#eef"/><circle cx="6" cy="5.500" r="1.500" fill="#369"/><circle cx="10.500" cy="10.500" r="4.500" fill="#66d832"/></svg>
        <svg viewBox="0 0 15 15"><circle cx="7.500" cy="7.500" r="7" fill="#878787"/><circle cx="7.500" cy="7.500" r="1.500" fill="#222"/></svg>
        <svg viewBox="0 0 15 15"><path d="M0 2l4 2 5-3v12L4 10l-4 2z" fill="#62bde9"/><path d="M9 3h5v10H9z" fill="#3c4d5c"/><path d="M9 5h5M9 8h5M9 11h5" stroke="#777"/></svg>
        <svg viewBox="0 0 15 15"><rect x="4.500" y="1" width="10" height="8" fill="#235ac0" stroke="#d7e7fa"/><rect x=".5" y="5" width="10" height="8" fill="#235ac0" stroke="#d7e7fa"/></svg>
        <svg viewBox="0 0 15 15"><path d="M1 14c0-6 4-9 8-10l3 3c-2 5-5 6-11 7z" fill="#64b6ea"/><path d="M9 3l3-3 3 3-3 4z" fill="#dfe8ef"/></svg>
        <svg viewBox="0 0 15 15"><path d="M1 3h5l2-2h6v13H1z" fill="#666"/></svg>
        <svg viewBox="0 0 15 15"><rect x=".5" y="1" width="14" height="11" fill="#d7e7fa"/><rect x="3" y="3" width="9" height="7" fill="#5b93e6" stroke="#103775"/><path d="M3 14h9" stroke="#d7e7fa" stroke-width="2"/></svg>
        <svg viewBox="0 0 15 15"><rect x="1" y="4" width="11" height="10" fill="#235ac0" stroke="#d7e7fa"/><path d="M6 1h9v7H6z" fill="#8aa1ed"/></svg>
        <svg viewBox="0 0 15 15"><rect y="1" width="9" height="13" fill="#7684d9"/><text x="1.500" y="11" font-size="9" font-family="Open Sans" font-weight="700" fill="#fff">V</text><rect x="11" width="4" height="15" fill="#000"/><path d="M13 2v12" stroke="#f00" stroke-width="2"/></svg>
        <svg viewBox="0 0 15 15"><ellipse cx="7" cy="7.500" rx="6.500" ry="7" fill="#8bd0ea"/><path d="M7 1l4 3-3 3 5 3-3 5h-3l1-5-3-3z" fill="#53c627"/></svg>
        <svg viewBox="0 0 15 15"><rect x=".5" y=".5" width="14" height="14" fill="#8ddcf4" stroke="#c9effa"/><path d="M6 3h3v4h3l-4.500 5L3 7h3z" fill="#45b93a"/></svg>
        <span>Right Ctrl</span>
        <svg class="sgrip" viewBox="0 0 12 12" fill="#999"><path d="M9 0h2v2H9zM6 3h2v2H6zM9 3h2v2H9zM3 6h2v2H3zM6 6h2v2H6zM9 6h2v2H9zM0 9h2v2H0zM3 9h2v2H3zM6 9h2v2H6zM9 9h2v2H9z"/></svg>
      </div>
    </section>

    <button class="side" aria-label="Открыть панель"><svg width="10" height="14" viewBox="0 0 10 14"><path d="M8 2L3 7l5 5" fill="none" stroke="#b8bfd4" stroke-width="2"/></svg></button>

    <footer class="taskbar">
      <button aria-label="Пуск"><svg viewBox="0 0 24 24" fill="#fff"><path d="M4 6l7-1v6.500H4zM12 5l8-1v7.500h-8zM4 12.500h7V19l-7-1zM12 12.500h8V20l-8-1z"/></svg></button>
      <button aria-label="Поиск"><svg viewBox="0 0 24 24" fill="none" stroke="#eee" stroke-width="1.400"><circle cx="13" cy="10" r="5.500"/><path d="M9 14l-6 7"/></svg></button>
      <button class="run" aria-label="Проводник"><svg viewBox="0 0 24 24"><path d="M2 3h7l2 3h11v16H2z" fill="#f6c84c"/><path d="M2 9h20v7H2z" fill="#ffdc73"/><path d="M5 22v-8h14v8h-4v-4H9v4z" fill="#4391c8"/></svg></button>
      <button class="run" aria-label="Chrome"><svg><use href="#i-chrome"/></svg></button>
      <button class="run" aria-label="VirtualBox"><svg viewBox="0 0 24 24" fill="none" stroke="#16707e" stroke-width="3"><path d="M0 4h4l5 15h2V10M23 14h-8v7h7v-6"/><path d="M15 9V5q0-2 3-2h4v6h-8" stroke="#e98c22" stroke-width="2.500"/></svg></button>
      <button class="run" aria-label="PowerShell"><svg viewBox="0 0 24 24"><rect x="1.500" y="3" width="21" height="19" rx="1" fill="#2c82dc"/><path d="M6 9l5 4-5 4M12 18h6" fill="none" stroke="#14283c" stroke-width="1.800"/></svg></button>
      <button class="run" aria-label="GitHub"><svg viewBox="0 0 24 24"><circle cx="12" cy="12" r="11" fill="#6e3192"/><g color="#fff"><use href="#i-octo" x="4" y="4" width="16" height="16"/></g></svg></button>
      <button class="run" aria-label="WordPad"><svg viewBox="0 0 24 24"><path d="M3 2h18v19H3z" fill="#cde2f1"/><path d="M3 2h18v2H3zM2 18h20v4H2z" fill="#78a9cf"/><path d="M5.500 14l3.500-9 3.500 9M7 11h4" fill="none" stroke="#e7822c" stroke-width="1.800"/><path d="M14 7h5M14 10h5M14 13h5M6 16h13" stroke="#4e7ba0"/></svg></button>
      <button class="run" aria-label="Монитор ресурсов"><svg viewBox="0 0 24 24"><path d="M2 8l6-3 3 12-8 2z" fill="#aaa"/><path d="M7 5l16-1-1 13-14 1z" fill="#dfe7ea" stroke="#999"/><path d="M9 14l3-1 1-4 2 4 2-2 1 3h2" fill="none" stroke="#3a8ec0"/><path d="M12 18h6l1 4h-9z" fill="#ccc"/></svg></button>
      <button class="run on" aria-label="andrey-lab5"><svg viewBox="0 0 30 30"><use href="#i-vb-r" width="30" height="30"/></svg></button>
      <div class="tray">
        <svg width="12" height="16" viewBox="0 0 12 16"><path d="M1 10l5-5 5 5" fill="none" stroke="#eee" stroke-width="1.300"/></svg>
        <svg width="16" height="16" viewBox="0 0 16 16"><path d="M1 2v3h3V2M2.500 5v5" stroke="#fff" fill="none"/><rect x="4.500" y="5.500" width="10" height="6" fill="#fff" stroke="#fff"/><path d="M15.500 7v3" stroke="#fff"/></svg>
        <svg width="14" height="16" viewBox="0 0 14 16"><path d="M1 13A12 12 0 0 1 12.500 3M4 13.500A9 9 0 0 1 12.500 6M7 14a6 6 0 0 1 5.500-4.500" fill="none" stroke="#aab3bd" stroke-width="1.200"/><circle cx="11.500" cy="13" r="1.500" fill="#fff"/></svg>
        <svg width="16" height="16" viewBox="0 0 16 16" fill="none" stroke="#eee"><path d="M1.500 6h2l3-3v10l-3-3h-2zM10 6l4.500 4.500M14.500 6L10 10.500"/></svg>
        <span class="eng">ENG</span>
        <div class="clock">2:09<br>23.12.2024</div>
        <div class="note"><svg width="18" height="18" viewBox="0 0 18 18"><path d="M1 2h15v11h-8l-3 3v-3H1z" fill="#fff"/><path d="M3 5h11M3 7.500h11M3 10h7" stroke="#1a2a45"/></svg><span>4</span></div>
      </div>
    </footer>
  </div>
</main>
</body>
</html>
```
FILE: styles.css
```css
* { box-sizing: border-box; }
html, body { height: 100%; }
body { margin: 0; display: flex; flex-direction: column; overflow: hidden; background: #6c6c6c; font: 12px/16px "Open Sans", "Noto Sans", sans-serif; color: #e8e8e8; }
button { font: inherit; color: inherit; background: none; border: 0; padding: 0; margin: 0; white-space: nowrap; }
a { color: inherit; text-decoration: none; }
p, h3, h4, dl, dd, ul { margin: 0; padding: 0; }
svg { display: block; flex: none; }
.defs { position: absolute; width: 0; height: 0; }
.icon-btn { display: flex; align-items: center; justify-content: center; flex: none; }

/* browser chrome */
.browser { flex: none; background: #333; border-bottom: 1px solid #5a5a5a; }
.tabs { display: flex; align-items: center; height: 34px; padding-bottom: 4px; gap: 6px; }
.tab-search { width: 33px; padding-left: 4px; height: 28px; }
.tab { display: flex; align-items: center; width: 94px; height: 28px; border-radius: 10px; background: #1a1a1a; padding: 0 7px; color: #ddd; flex: none; }
.tab.active { background: none; color: #fff; }
.tab .fav { width: 18px; height: 18px; margin-right: 7px; }
.tab.octo .fav { color: #fff; }
.tab span { width: 30px; overflow: hidden; white-space: nowrap; font-size: 12px; -webkit-mask-image: linear-gradient(90deg, #000 65%, transparent); }
.tab.active span { -webkit-mask-image: none; }
.tab button { margin-left: 11px; }
.tab button svg { width: 12px; height: 12px; }
.new-tab { width: 28px; height: 28px; border-radius: 50%; background: #1a1a1a; }
.win-ctl { display: flex; margin-left: auto; align-items: center; }
.win-ctl svg { width: 12px; height: 12px; }
.win-ctl button { width: 45px; height: 28px; }
.chrome-ctl { color: #fff; }
.chrome-ctl button { width: 46px; }
.toolbar { display: flex; align-items: center; height: 47px; padding: 0 12px 0 2px; }
.nav-btn { width: 36px; height: 36px; }
.omnibox { flex: 1; display: flex; align-items: center; height: 34px; margin-left: 8px; border-radius: 17px; background: #1a1a1a; padding: 0 16px 0 5px; gap: 16px; }
.site { width: 24px; height: 24px; border-radius: 50%; background: #363636; }
.omnibox > svg { width: 16px; height: 16px; fill: none; stroke: #c7c7c7; stroke-width: 1.500; }
.omnibox > svg.wide { width: 20px; margin: 0 -2px; }
.url { flex: 1; margin-left: -8px; font: 13px/18px "Noto Sans", "Open Sans", sans-serif; color: #929292; white-space: nowrap; }
.url b { font-weight: 400; color: #fff; }
.ext { margin: 0 17px; }
.divider { width: 2px; height: 16px; background: #202020; margin-right: 17px; }
.menu { width: 16px; margin-left: 18px; }

/* remote screen */
.page { flex: 1; display: flex; min-height: 0; padding: 33px 0 5px; background: linear-gradient(#828282, #7c7c7c 34px, #686868); }
.desktop { position: relative; flex: 1; overflow: hidden; background: linear-gradient(100deg, #00aef5 0, #00a5ee 30%, #0062d4 68%, #0547bd 88%, #0437ac); }
.win { position: absolute; overflow: hidden; }
.backdrop { left: 600px; top: 300px; width: 668px; bottom: 38px; background: #202121; }
.manager { left: 81px; top: 656px; width: 807px; bottom: 38px; background: #3a3c3b; display: flex; padding-left: 15px; box-shadow: 0 0 8px #0008; }
.vm-list { width: 243px; flex: none; border-right: 1px solid #2a2b2b; }
.vm { display: flex; gap: 7px; padding: 12px 0 0 15px; height: 54px; background: linear-gradient(#424343, #484949); border-bottom: 1px solid #353636; font-size: 11px; line-height: 16px; }
.vm-ico { width: 31px; height: 31px; }
.vm b, .vm span { display: flex; gap: 4px; white-space: nowrap; color: #fff; }
.vm span { color: #e2e2e2; }
.vm span svg { width: 15px; height: 15px; }
.vm.sel { background: #379ca9; }
.vm.sel b { color: #062226; }
.details { flex: 1; line-height: 15px; white-space: nowrap; font-size: 11px; }
.det-top { display: flex; height: 50px; border-bottom: 1px solid #2f3030; }
.kvm { width: 311px; padding: 5px 0 0 129px; border-right: 1px solid #2f3030; }
.preview { padding-left: 16px; filter: drop-shadow(0 2px 3px #0008); }
.details h3 { display: flex; gap: 8px; padding: 3px 7px 0; font-size: 11px; line-height: 19px; color: #fff; }
.details dl { display: grid; grid-template-columns: 161px 1fr; padding: 5px 7px 0; }

.titlebar { display: flex; align-items: center; height: 28px; background: #000; color: #e4e4e4; padding-left: 7px; gap: 4px; font-size: 11px; white-space: nowrap; }
.tb-ico { width: 15px; height: 15px; }
.titlebar.dim { background: #2b2c2b; color: #7b7b7b; padding-left: 0; }
.menubar { display: flex; align-items: center; height: 20px; background: #3b3c3c; color: #eee; padding-left: 9px; gap: 13px; font-size: 11px; }
.menubar.cut { padding-left: 0; }
.menubar.cut button:first-child { width: 14px; display: flex; justify-content: flex-end; }

/* first virtual machine */
.vm-a { left: 0; top: 2px; width: 1015px; height: 659px; display: flex; flex-direction: column; background: #3b3c3b; box-shadow: 0 0 8px #0006; }
.guest-a { position: relative; flex: 1; background: #850000; color: #222; display: flex; flex-direction: column; justify-content: flex-end; font: 10px/14px "DejaVu Sans", sans-serif; }
.status-a { height: 22px; }
.left-win { left: 0; top: 1px; width: 32px; height: 504px; background: #ebebec; display: flex; flex-direction: column; align-items: flex-end; border-bottom: 2px solid #c2c2c2; }
.left-win p { white-space: nowrap; line-height: 16px; padding-right: 1px; }
.left-win svg { width: 32px; height: 83px; }
.lw-title { width: 100%; height: 19px; line-height: 20px; background: #bcbec0; overflow: hidden; white-space: nowrap; display: flex; justify-content: flex-end; }
.left-win .t1 { margin-top: 18px; padding-right: 4px; }
.left-win .t2 { margin-top: 14px; padding-right: 0; }
.lw-sel { width: 100%; height: 30px; background: #7990a0; margin-top: 38px; }
.left-win .t3 { margin-top: 7px; }
.left-win .t4 { margin-top: 15px; padding-right: 29px; }
.lw-input { width: 100%; height: 22px; background: #fff; border: solid #bbb; border-width: 1px 0; margin-top: 156px; }
.right-win { left: 369px; top: 7px; right: 0; height: 545px; display: flex; flex-direction: column; background: #e2e2e2; border: solid #b9baba; border-width: 0 1px 3px 3px; }
.rw-title { height: 20px; background: #bdbfbe; }
.rw-body { flex: 1; }
.rw-tabs { display: flex; height: 29px; padding-left: 2px; gap: 2px; border-top: 1px solid #ccc; }
.rw-tabs .add { width: 22px; height: 22px; margin-top: 5px; border: 1px solid #aaa; border-radius: 2px; display: flex; align-items: center; justify-content: center; }
.rw-tabs .one { width: 60px; height: 26px; padding-top: 4px; background: #f0f0f0; border: 1px solid #c5c5c5; border-bottom: 2px solid #7990a0; }
.policy { left: 32px; top: 0; width: 878px; height: 522px; background: #e5e5e5; border: 4px solid #850000; border-width: 2px 3px 3px 4px; outline: 1px solid #ac3939; outline-offset: -1px; display: flex; flex-direction: column; }
.p-title { display: flex; align-items: center; flex: none; height: 20px; background: #850000; color: #fff; font: 10px/19px "Noto Sans", sans-serif; white-space: nowrap; border-bottom: 1px solid #a44; }
.p-ctl { display: flex; margin-left: auto; padding-right: 4px; gap: 8px; }
.p-ctl svg { width: 11px; height: 11px; }
.p-menu { display: flex; flex: none; gap: 15px; padding: 0 7px; height: 21px; }
.p-tools { display: flex; flex: none; align-items: center; height: 38px; padding: 0 0 2px 7px; gap: 8px; }
.p-tools svg { width: 18px; height: 18px; }
.p-tools .round { width: 18px; height: 18px; border-radius: 50%; background: #b8b8b8; flex: none; }
.p-tools .round svg { fill: none; stroke: #fff; stroke-width: 1.800; }
.p-tools .green { background: #88b944; }
.grip { width: 3px; height: 26px; border: solid #bbb; border-width: 0 1px; flex: none; margin-right: -3px; }
.grip.g2 { margin-left: 7px; }
.grip.g3 { width: 1px; border-width: 0 0 0 1px; }
.grip.g4 { margin-left: 9px; }
.filter { width: 142px; height: 23px; margin-left: -3px; border: 1px solid #c7c7c7; border-radius: 3px; background: #e3e3e3; color: #8c8c8c; font: inherit; appearance: none; padding: 0 4px; opacity: 1; background-image: linear-gradient(45deg, transparent 45%, #aaa 45% 60%, transparent 60%), linear-gradient(-45deg, transparent 45%, #aaa 45% 60%, transparent 60%); background-size: 5px 5px; background-position: right 7px center, right 3px center; background-repeat: no-repeat; }
.p-main { flex: 1; display: flex; gap: 3px; min-height: 0; padding: 0 0 19px 2px; }
.tree { display: flex; flex: none; width: 194px; background: #fff; border: 1px solid #bcbcbc; border-radius: 3px; overflow: hidden; }
.tree ul { list-style: none; flex: 1; background: linear-gradient(90deg, transparent 22px, #b5b5b5 22px 23px, transparent 23px); }
.tree li { display: flex; height: 19px; padding-left: 18px; }
.tree li.l2 { padding-left: 33px; }
.tree .tw { width: 14px; height: 19px; }
.tree li:not(.l2) .tw { background: #fff; }
.tree li a { flex: 1; display: flex; align-items: center; gap: 4px; white-space: nowrap; }
.tree li a svg { width: 13px; height: 13px; }
.tree li.sel a { background: #7a91a0; color: #fff; }
.lane { width: 16px; border-left: 1px solid #e0e0e0; padding: 45px 5px 0 4px; }
.lane i { display: block; height: 286px; border-radius: 3px; background: #adadad; border: 1px solid #929292; }
.pane { flex: 1; min-width: 0; border: 1px solid #a9ccd9; padding: 0 0 0 7px; background: #ededed; box-shadow: inset 2px 0 #ededed, inset 3px 0 #bbb; overflow: hidden; }
.privs { height: 125px; border: 1px solid #b8b8b8; border-top: 0; border-radius: 0 0 3px 3px; padding: 0 5px 5px; }
.privs-in { height: 100%; background: #fff; border: 1px solid #b8b8b8; border-top: 0; padding-left: 4px; overflow: hidden; }
.privs label { display: flex; align-items: center; gap: 6px; height: 20px; white-space: nowrap; }
.privs label:first-child { height: 15px; align-items: flex-start; line-height: 11px; }
.privs input { appearance: none; width: 12px; height: 12px; margin: 0; border: 1px solid #6d9ab4; border-radius: 2px; background: #c5dcea; position: relative; }
.privs input::after { content: ""; position: absolute; left: 3px; top: 0; width: 4px; height: 7px; border: solid #222; border-width: 0 2px 2px 0; rotate: 40deg; }
.boxes { display: flex; gap: 3px; margin-top: 4px; }
.gbox { width: 316px; height: 198px; flex: none; border: 1px solid #b8b8b8; border-radius: 3px; padding: 0 3px; }
.gbox h4 { font-weight: 400; text-align: center; line-height: 20px; height: 22px; }
.list { height: 144px; background: #fff; border: 1px solid #b5b5b5; border-radius: 2px; }
.list table { width: 100%; border-collapse: collapse; }
.list th { font-weight: 400; text-align: left; height: 21px; padding: 0 4px; background: #e3e3e3; border-bottom: 1px solid #ccc; }
.list th.name { width: 104px; border-right: 1px solid #aaa; }
.list th span, .list td span { display: flex; justify-content: space-between; align-items: center; }
.list td { padding: 3px 2px; }
.list td span { justify-content: flex-start; gap: 4px; }
.pm { display: flex; justify-content: flex-end; gap: 4px; padding-top: 4px; }
.pm button { width: 22px; height: 23px; display: flex; align-items: center; justify-content: center; border: 1px solid #7d99aa; border-radius: 2px; background: #c5d0d7; }
.pm .off { border-color: #a9bac5; }
.pm svg { width: 12px; height: 12px; }
.red-bar { display: flex; height: 36px; background: #780000; border-top: 1px solid #981d1d; color: #fff; font: 10px/35px "Noto Sans", sans-serif; }
.home { margin: 7px 8px 0 0; }
.rb { display: flex; align-items: center; width: 129px; gap: 2px; padding-left: 3px; position: relative; }
.rb.r1 { border-left: 1px solid #931e1e; width: 141px; padding-left: 10px; gap: 1px; }
.rb.net { padding-left: 5px; }
.rb svg { width: 24px; height: 24px; }
.rb.act { background: #ae5355; font-weight: 700; }
.star { position: absolute; left: 2px; top: 0; font: 12px/14px "DejaVu Sans", sans-serif; color: #ddd; }

/* second virtual machine */
.vm-n { left: 661px; top: 130px; width: 608px; height: 527px; display: flex; flex-direction: column; background: #3b3c3b; box-shadow: 0 0 10px #0009; outline: 1px solid #30303080; }
.guest-n { position: relative; flex: 1; display: flex; flex-direction: column; justify-content: flex-end; background: #5683a2; color: #fff; }
.paper { position: absolute; left: 0; top: 0; width: 100%; height: 420px; }
.icons { position: absolute; left: 0; top: 5px; width: 80px; }
.icons a { display: block; text-align: center; font: 9px/14px "Noto Sans", sans-serif; white-space: nowrap; text-shadow: 1px 1px 1px #0007; }
.icons svg { width: 38px; height: 38px; margin: 0 auto 5px; }
.icons .d1 { height: 80px; }
.icons .d2 { height: 73px; }
.icons .d3 { height: 80px; }
.icons .d4 { height: 77px; }
.icons .d2 svg { margin-bottom: 0; }
.icons .d4 svg { margin-bottom: 2px; }
.init { position: absolute; left: 170px; top: 168px; font: 20px/24px "DejaVu Sans Mono", monospace; white-space: nowrap; }
.logo { position: absolute; right: 26px; top: 335px; height: 38px; width: 151px; border: 2px solid #fff; border-radius: 8px; display: flex; justify-content: center; align-items: center; font: 21px/34px "Liberation Sans Narrow", "Open Sans", sans-serif; white-space: nowrap; }
.logo sup { font-size: 8px; line-height: 20px; align-self: flex-start; }
.logo svg { position: absolute; left: 66px; top: -10px; width: 16px; height: 16px; }
.n-bar { position: relative; display: flex; align-items: center; height: 36px; background: #4c7494; border-top: 1px solid #7ea1bc; padding-left: 5px; gap: 12px; }
.s24 { width: 24px; height: 24px; }
.n-tray { display: flex; align-items: center; margin-left: auto; gap: 8px; height: 100%; }
.n-tray svg:first-child { margin-right: -1px; }
.bat { margin-left: 26px; }
.lang { width: 25px; height: 25px; border: 1px solid #7fa0b9; border-radius: 3px; font-size: 12px; }
.n-div { width: 1px; height: 30px; background: #7493ab; margin-left: -2px; }
.n-clock { display: flex; flex-direction: column; align-items: center; width: 48px; margin-left: -3px; white-space: nowrap; }
.n-clock b { font: 14px/18px "Noto Sans", sans-serif; }
.n-clock span { font: 9px/12px "Noto Sans", sans-serif; }
.n-edge { width: 4px; height: 100%; background: #7fa3bf; margin-left: -2px; }
.status-n { display: flex; align-items: center; justify-content: flex-end; height: 23px; gap: 3px; font-size: 11px; white-space: nowrap; }
.status-n svg { width: 15px; height: 15px; }
.status-n svg.sgrip { width: 12px; height: 12px; align-self: flex-end; margin-left: 8px; }

.side { position: absolute; right: -32px; top: 386px; width: 50px; height: 50px; border-radius: 50%; background: #1b2b55; display: flex; align-items: center; padding-left: 9px; }

.taskbar { position: absolute; left: 0; right: 0; bottom: 0; height: 38px; display: flex; align-items: center; gap: 8px; background: linear-gradient(90deg, #20383f, #223032 25%, #222626 40%, #202222 82%, #182742 90%, #1a2745); }
.taskbar > button { width: 39px; height: 38px; display: flex; align-items: center; justify-content: center; border-bottom: 2px solid transparent; }
.taskbar > button:first-child { margin-left: 1px; }
.taskbar > button svg { width: 24px; height: 24px; }
.taskbar > .run { border-bottom-color: #74b2e4; }
.taskbar > .on { background: #505253; width: 43px; margin-left: -1px; }
.tray { margin-left: auto; display: flex; align-items: center; gap: 8px; padding-right: 14px; font-size: 11px; line-height: 17px; color: #fff; white-space: nowrap; }
.eng { margin-left: 2px; }
.clock { text-align: center; margin-left: 4px; }
.note { position: relative; width: 24px; margin-left: 8px; }
.note span { position: absolute; left: 8px; top: 6px; width: 15px; height: 15px; border-radius: 50%; border: 1px solid #888; background: #333; font: 700 10px/13px "Open Sans", sans-serif; text-align: center; }
```
